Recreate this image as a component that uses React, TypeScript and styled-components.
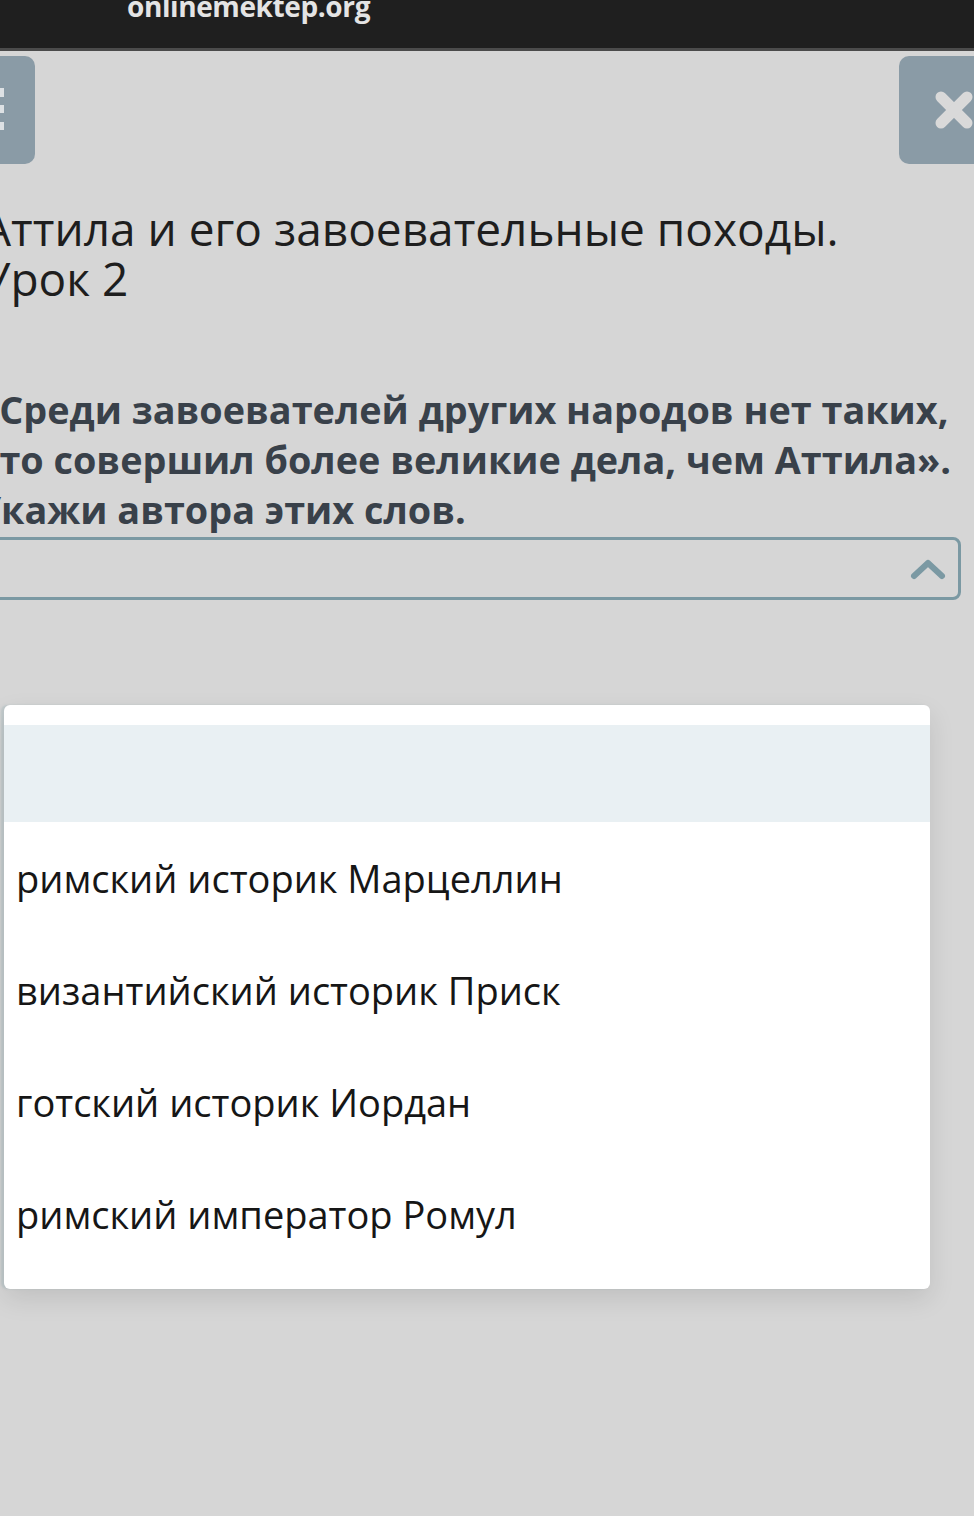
import React from "react";
import styled, { createGlobalStyle } from "styled-components";

const Global = createGlobalStyle`
  html, body { margin: 0; padding: 0; }
  body {
    background: #d6d6d6;
    font-family: "Open Sans", "Noto Sans", sans-serif;
    overflow: hidden;
  }
`;

const Page = styled.div`
  width: 974px;
  height: 1516px;
  overflow: hidden;
  background: #d6d6d6;
`;

const Header = styled.header`
  height: 48px;
  background: #1f1f1f;
  border-bottom: 3px solid #4b4b4b;
  overflow: hidden;
`;

const Logo = styled.div`
  margin: -8px 0 0 127px;
  font-family: "Open Sans", sans-serif;
  font-weight: 700;
  font-size: 28px;
  line-height: 28px;
  letter-spacing: -0.4px;
  color: #e4e4e4;
`;

const Toolbar = styled.div`
  display: flex;
  justify-content: space-between;
  margin-top: 5px;
`;

const SquareButton = styled.div<{ $side: "left" | "right" }>`
  width: ${(p) => (p.$side === "left" ? 70 : 110)}px;
  height: 108px;
  border-radius: 10px;
  background: #8a9ba6;
  margin-left: ${(p) => (p.$side === "left" ? "-35px" : "0")};
  margin-right: ${(p) => (p.$side === "right" ? "-35px" : "0")};
  display: flex;
  align-items: center;
  justify-content: center;
  flex-shrink: 0;
`;

const Content = styled.main`
  margin-left: -16px;
  width: 977px;
`;

const Title = styled.h1`
  margin: 39px 0 0 -2px;
  font-family: "Open Sans", sans-serif;
  font-weight: 400;
  font-size: 46px;
  line-height: 50px;
  color: #1e1e1e;
  white-space: nowrap;
`;

const Question = styled.p`
  margin: 82px 0 0 -8px;
  font-family: "Open Sans", sans-serif;
  font-weight: 700;
  font-size: 37.8px;
  line-height: 50px;
  color: #39414a;
  white-space: nowrap;
`;

const Select = styled.div`
  margin-top: 2px;
  height: 57px;
  border: 3px solid #7b99a3;
  border-radius: 8px;
  display: flex;
  align-items: center;
  justify-content: flex-end;
  padding-right: 12px;
`;

const Menu = styled.div`
  margin: 105px 0 0 20px;
  width: 926px;
  background: #ffffff;
  border-radius: 6px;
  padding: 20px 0 19px;
  box-shadow: 0 10px 26px rgba(0, 0, 0, 0.1), -3px 0 2px rgba(150, 175, 180, 0.35);
`;

const Placeholder = styled.div`
  height: 97px;
  background: #e9f0f3;
`;

const Option = styled.div`
  height: 112px;
  display: flex;
  align-items: center;
  padding-left: 12px;
  font-family: "Open Sans", sans-serif;
  font-size: 38px;
  color: #161616;
  white-space: nowrap;
`;

const options = [
  "римский историк Марцеллин",
  "византийский историк Приск",
  "готский историк Иордан",
  "римский император Ромул",
];

export default function App() {
  return (
    <Page>
      <Global />
      <Header>
        <Logo>onlinemektep.org</Logo>
      </Header>
      <Toolbar>
        <SquareButton $side="left">
          <svg width="70" height="108" viewBox="0 0 70 108">
            <g fill="#dde1e4">
              <rect x="10" y="32" width="29" height="9" />
              <rect x="10" y="49" width="29" height="8" />
              <rect x="10" y="66" width="29" height="8" />
            </g>
          </svg>
        </SquareButton>
        <SquareButton $side="right">
          <svg width="40" height="40" viewBox="0 0 40 40">
            <g stroke="#d9d9d9" strokeWidth="11" strokeLinecap="round">
              <line x1="7" y1="7" x2="33" y2="33" />
              <line x1="33" y1="7" x2="7" y2="33" />
            </g>
          </svg>
        </SquareButton>
      </Toolbar>
      <Content>
        <Title>
          Аттила и его завоевательные походы.
          <br />
          Урок 2
        </Title>
        <Question>
          «Среди завоевателей других народов нет таких,
          <br />
          кто совершил более великие дела, чем Аттила».
          <br />
          Укажи автора этих слов.
        </Question>
        <Select>
          <svg width="36" height="24" viewBox="0 0 36 24">
            <polyline
              points="4,19 18,6 32,19"
              fill="none"
              stroke="#7b99a3"
              strokeWidth="6"
              strokeLinecap="round"
              strokeLinejoin="round"
            />
          </svg>
        </Select>
        <Menu>
          <Placeholder />
          {options.map((o) => (
            <Option key={o}>{o}</Option>
          ))}
        </Menu>
      </Content>
    </Page>
  );
}
